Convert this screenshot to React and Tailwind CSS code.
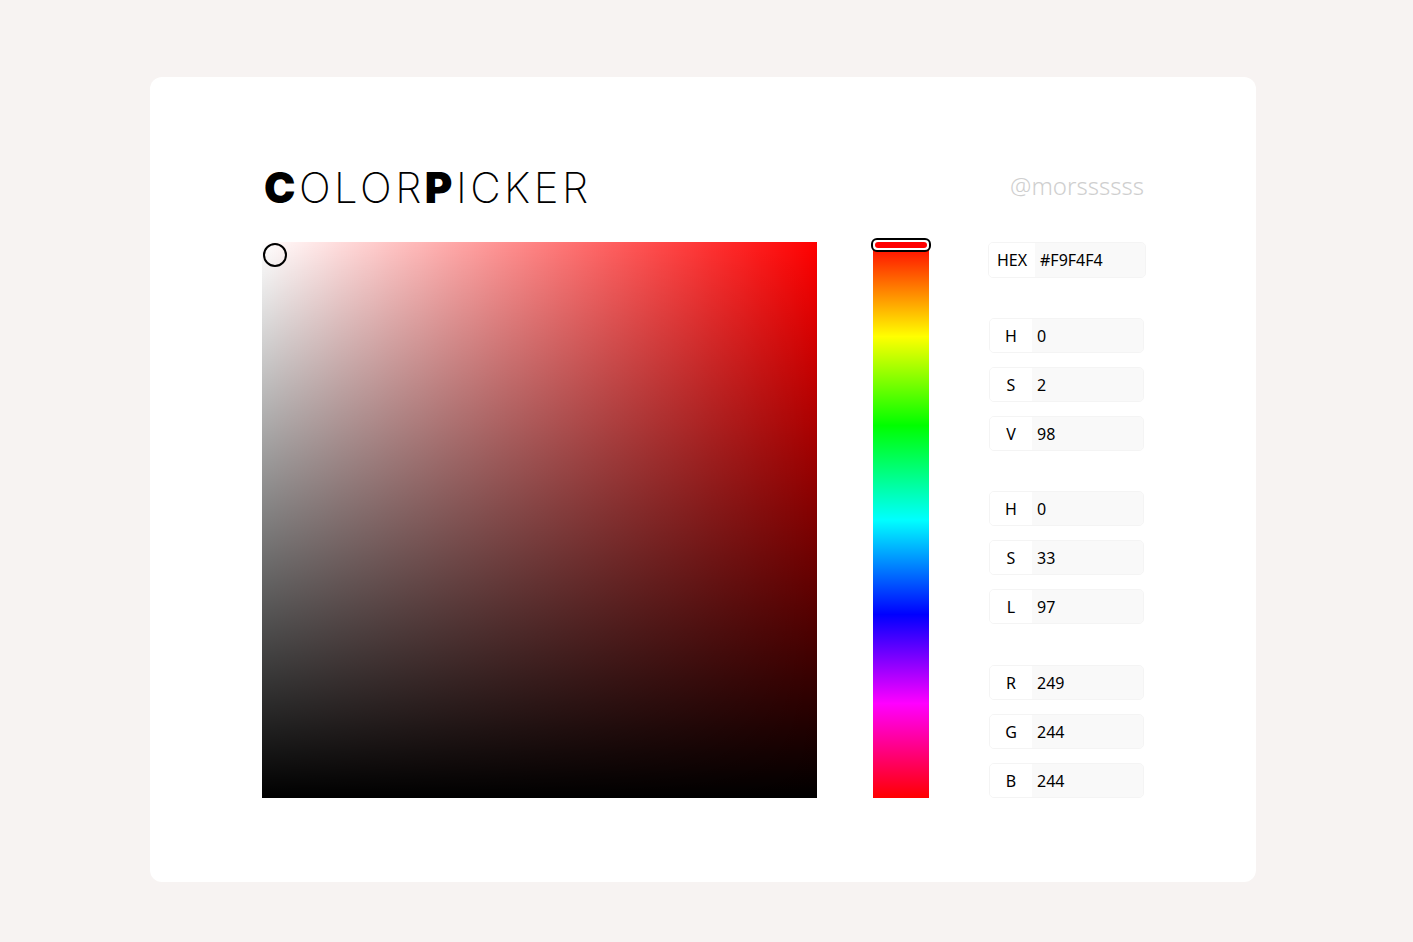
const groups = [
  [["H", "0"], ["S", "2"], ["V", "98"]],
  [["H", "0"], ["S", "33"], ["L", "97"]],
  [["R", "249"], ["G", "244"], ["B", "244"]],
];

function Field({ label, value }) {
  return (
    <div className="ml-[1px] flex h-[35px] w-[155px] overflow-hidden rounded-[5px] border border-[#f4f4f4]">
      <div className="flex w-[42px] shrink-0 items-center justify-center bg-white text-[16px] text-black">{label}</div>
      <div className="flex flex-1 items-center bg-[#f9f9f9] pl-[5px] text-[16px] text-black">{value}</div>
    </div>
  );
}

export default function App() {
  return (
    <div className="min-h-[942px] bg-[#f7f3f2] pt-[77px] font-['Noto_Sans',sans-serif]">
      <div className="ml-[150px] w-[1106px] rounded-[12px] bg-white pl-[112px] pr-[110px] pt-[90px] pb-[84px]">
        {/* En-tête */}
        <div className="flex h-[50px] w-[884px] items-start justify-between">
          <h1 className="ml-[2px] font-['Inter',sans-serif] text-[42px] font-extralight leading-none tracking-[3.5px] text-black">
            <span className="font-black">C</span>OLOR<span className="font-black">P</span>ICKER
          </h1>
          <span className="mr-[2px] mt-[1px] text-[24px] font-light text-[#cfcfcf]">@morssssss</span>
        </div>

        <div className="mt-[25px] flex">
          {/* Saturation / valeur */}
          <div className="relative h-[556px] w-[555px] bg-[#ff0000]">
            <div className="absolute inset-0 bg-gradient-to-r from-white to-transparent" />
            <div className="absolute inset-0 bg-gradient-to-t from-black to-transparent" />
            <div className="absolute left-[1px] top-[1px] h-[24px] w-[24px] rounded-full border-2 border-black" />
          </div>

          {/* Teinte */}
          <div className="relative ml-[56px] h-[556px] w-[56px] bg-[linear-gradient(to_bottom,#ff0000_0%,#ffff00_17%,#00ff00_33%,#00ffff_50%,#0000ff_67%,#ff00ff_83%,#ff0000_100%)]">
            <div className="absolute -left-[2px] -top-[4px] flex h-[14px] w-[60px] items-center rounded-[6px] border-2 border-black bg-white px-[2px]">
              <div className="h-[6px] w-full rounded-full bg-[#ff0000]" />
            </div>
          </div>

          {/* Valeurs */}
          <div className="ml-[59px] flex flex-col">
            <div className="flex h-[36px] w-[158px] overflow-hidden rounded-[5px] border border-[#f4f4f4]">
              <div className="flex w-[46px] shrink-0 items-center justify-center bg-white text-[16px] text-black">HEX</div>
              <div className="flex flex-1 items-center bg-[#f9f9f9] pl-[5px] text-[16px] text-black">#F9F4F4</div>
            </div>
            {groups.map((g, i) => (
              <div key={i} className={`flex flex-col gap-[14px] ${i === 2 ? "mt-[41px]" : "mt-[40px]"}`}>
                {g.map(([l, v]) => (
                  <Field key={l} label={l} value={v} />
                ))}
              </div>
            ))}
          </div>
        </div>
      </div>
    </div>
  );
}
